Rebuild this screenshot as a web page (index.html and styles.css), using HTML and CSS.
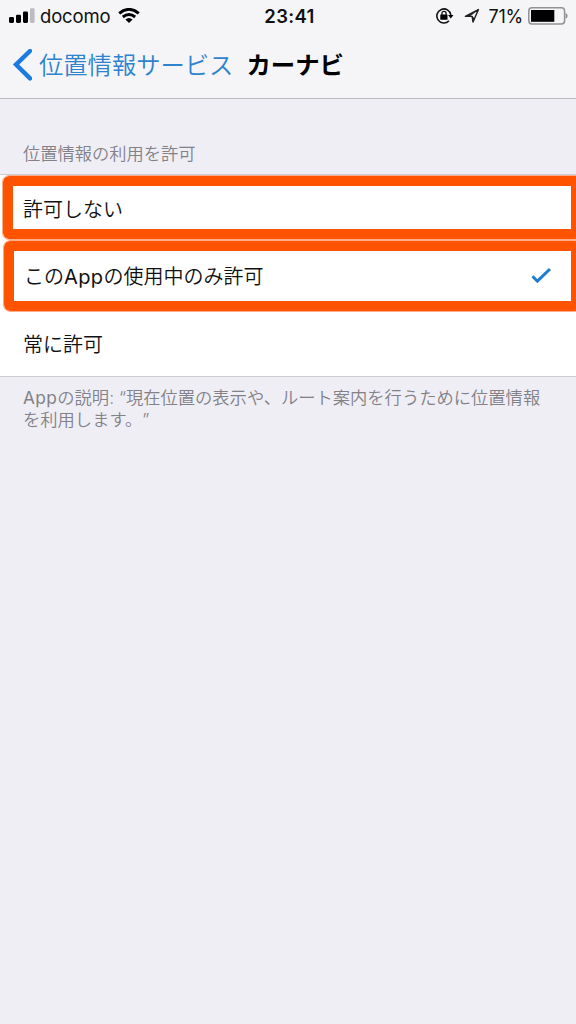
FILE: index.html
```html
<!DOCTYPE html>
<html lang="ja">
<head>
<meta charset="utf-8">
<title>カーナビ</title>
<link rel="stylesheet" href="styles.css">
</head>
<body>
<header class="header">
  <div class="status">
    <div class="status-left">
      <svg class="signal" width="26" height="16" viewBox="0 0 26 16"><rect x="0" y="8.9" width="5" height="6" rx="1.3"/><rect x="7" y="6.7" width="5" height="8.2" rx="1.3"/><rect x="14" y="3.4" width="5" height="11.5" rx="1.3"/><rect class="dim" x="21" y="0.2" width="4.6" height="14.7" rx="1.3"/></svg>
      <span class="carrier">docomo</span>
      <svg class="wifi" width="22" height="16" viewBox="0 0 22 16"><path class="arc" d="M1.2 5.3Q11 -2.6 20.8 5.3M4.8 9Q11 4 17.2 9"/><path d="M7.4 11.4Q11 8.4 14.6 11.4L11 15Z"/></svg>
    </div>
    <time class="clock">23:41</time>
    <div class="status-right">
      <svg class="lock" width="18" height="16" viewBox="0 0 18 16"><path class="ring" d="M13 12.7A7 7 0 1 1 14.8 7"/><path d="M12 7H17.5L14.8 10.4Z"/><rect x="4.3" y="6.6" width="7.2" height="5.2" rx=".5"/><path class="shackle" d="M5.9 7V5.4a2.1 2.1 0 0 1 4.2 0V7"/></svg>
      <svg class="arrow" width="16" height="16" viewBox="0 0 16 16"><path d="M1.4 8.4L14.4 1.6L9 14L8.2 8.4Z"/><path class="wing" d="M1.4 8.4L14.4 1.6L5.5 8.4ZM8.2 8.4L9 14L10.4 10.6Z"/></svg>
      <span class="percent">71%</span>
      <svg class="battery" width="42" height="18" viewBox="0 0 42 18"><rect class="shell" x=".8" y=".8" width="35.8" height="16.2" rx="3.2"/><rect x="3" y="3" width="23.3" height="11.8"/><path class="cap" d="M37.6 6Q39.6 6.5 39.6 8.8T37.6 11.8Z"/></svg>
    </div>
  </div>
  <nav class="nav">
    <svg class="back" width="20" height="32" viewBox="0 0 20 32"><path d="M18 2L4 15.6L18 29.4"/></svg>
    <a class="parent">位置情報サービス</a>
    <h1 class="title">カーナビ</h1>
  </nav>
</header>
<main>
  <h2 class="label">位置情報の利用を許可</h2>
  <ul class="options">
    <li class="option first"><span>許可しない</span><i class="mark"></i></li>
    <li class="option second"><span>この<span class="latin">App</span>の使用中のみ許可</span><svg class="check" width="22" height="18" viewBox="0 0 22 18"><path d="M2.5 9.3L7.4 14.2L20 2"/></svg><i class="mark"></i></li>
    <li class="option third"><span>常に許可</span></li>
  </ul>
  <p class="note"><span class="latin">App</span>の説明: “現在位置の表示や、ルート案内を行うために位置情報<br>を利用します。”</p>
</main>
</body>
</html>
```
FILE: styles.css
```css
* { box-sizing: border-box; margin: 0; padding: 0; }
body {
  height: 1024px;
  overflow: hidden;
  background: #efeef5;
  color: #111;
  font-family: Inter, "Noto Sans CJK JP", sans-serif;
  text-spacing-trim: space-all;
}
.header { height: 99px; background: #f5f5f8; border-bottom: 1px solid #b9b9be; }
.status {
  display: grid;
  grid-template-columns: 1fr auto 1fr;
  align-items: center;
  height: 32px;
  padding: 0 9px;
}
.status-left, .status-right { display: flex; align-items: center; }
.status-right { justify-content: flex-end; }
.signal { margin-right: 5px; }
.signal .dim { fill: #bcbcc0; }
.carrier { font-size: 18.5px; letter-spacing: -0.15px; }
.wifi { margin-left: 8px; }
.arc { fill: none; stroke: #000; stroke-width: 2.9; }
.clock { padding-left: 3px; font-size: 18.5px; font-weight: 600; letter-spacing: 0.3px; }
.ring { fill: none; stroke: #111; stroke-width: 1.6; }
.shackle { fill: none; stroke: #111; stroke-width: 1.3; }
.arrow { margin: 0 8px 0 10px; }
.arrow path { fill: none; stroke: #222; stroke-width: 1.4; stroke-linejoin: round; }
.arrow .wing { fill: #222; stroke-width: 0.6; }
.percent { font-size: 18px; letter-spacing: -0.2px; }
.battery { margin: 0 -3px 0 5px; }
.shell { fill: none; stroke: #929296; stroke-width: 1.5; }
.cap { fill: #929296; }
.nav { display: flex; align-items: center; height: 66px; padding: 0 0 0 12px; }
.back path { fill: none; stroke: #1b7ce0; stroke-width: 4.4; stroke-linecap: round; stroke-linejoin: miter; }
.parent { margin-left: 7px; color: #2f83cd; font-size: 24.3px; font-weight: 350; line-height: 36px; }
.title { margin-left: 13px; color: #000; font-size: 24.4px; font-weight: 700; line-height: 36px; }
.label { padding: 42px 0 0 23px; height: 75px; color: #828187; font-size: 17.25px; font-weight: 350; line-height: 26px; }
.options { list-style: none; background: #fff; border: solid #cdccd2; border-width: 1px 0; }
.option {
  position: relative;
  display: flex;
  align-items: center;
  justify-content: space-between;
  padding: 0 24px 0 23px;
  font-size: 20px;
  font-weight: 350;
}
.latin { font-weight: 400; letter-spacing: 0.4px; }
.first { height: 66px; }
.second { height: 69px; padding-left: 24px; }
.third { height: 66px; }
.check path { fill: none; stroke: #217bd0; stroke-width: 3; }
.mark { position: absolute; left: 3px; right: -5px; border: 10px solid #ff5300; border-radius: 6px; outline: 1px solid #f9b08a; }
.first .mark { top: 1px; bottom: 2px; }
.second .mark { left: 4px; top: 0; bottom: -1px; }
.note { padding: 10px 0 0 23px; color: #828187; font-size: 17.3px; font-weight: 350; line-height: 21.5px; white-space: nowrap; }
```
